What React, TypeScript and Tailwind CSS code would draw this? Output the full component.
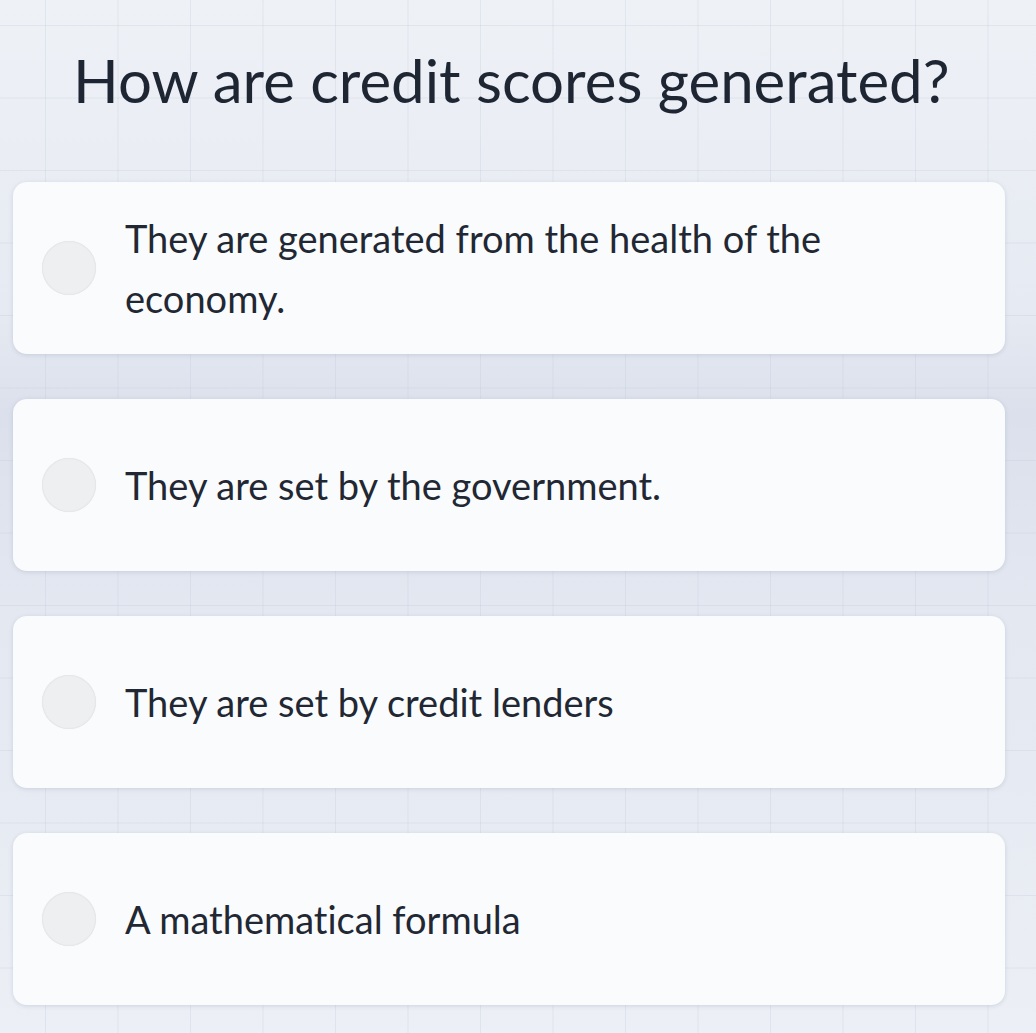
import React from "react";

const options = [
  "They are generated from the health of the economy.",
  "They are set by the government.",
  "They are set by credit lenders",
  "A mathematical formula",
];

function Option({ label }: { label: string }) {
  return (
    <div className="flex h-[172px] items-center rounded-[14px] bg-[#fafbfd] pl-[29px] pr-[150px] shadow-[0_1px_4px_rgba(120,130,160,0.25)]">
      <div className="h-[54px] w-[54px] shrink-0 rounded-full bg-[#eeeff1] shadow-[inset_0_0_2px_rgba(0,0,0,0.1),0_0_1px_rgba(0,0,0,0.08)]" />
      <p className="ml-[29px] text-[38px] leading-[60px] text-[#222833] [font-variant-ligatures:none]">{label}</p>
    </div>
  );
}

export default function App() {
  return (
    <div className="relative min-h-[1033px] w-full overflow-hidden bg-[linear-gradient(180deg,#eef1f6_0%,#e6eaf2_30%,#dbe0ec_40%,#e4e8f1_60%,#e6eaf2_75%,#eceff5_100%)] font-['Lato','Open_Sans',sans-serif]">
      {/* faint graph-paper grid */}
      <div className="pointer-events-none absolute inset-0 bg-[linear-gradient(90deg,rgba(190,198,214,0.28)_1px,transparent_1px),linear-gradient(180deg,rgba(190,198,214,0.28)_1px,transparent_1px)] bg-[size:72.5px_72.5px] bg-[position:45px_25px]" />
      <div className="relative flex flex-col px-[13px] pr-[31px]">
        <h1 className="pl-[60px] pt-[45px] pb-[67px] text-[60px] leading-[70px] text-[#1f2633] [font-variant-ligatures:none]">
          How are credit scores generated?
        </h1>
        <div className="flex flex-col gap-[45px]">
          {options.map((o) => (
            <Option key={o} label={o} />
          ))}
        </div>
      </div>
    </div>
  );
}
